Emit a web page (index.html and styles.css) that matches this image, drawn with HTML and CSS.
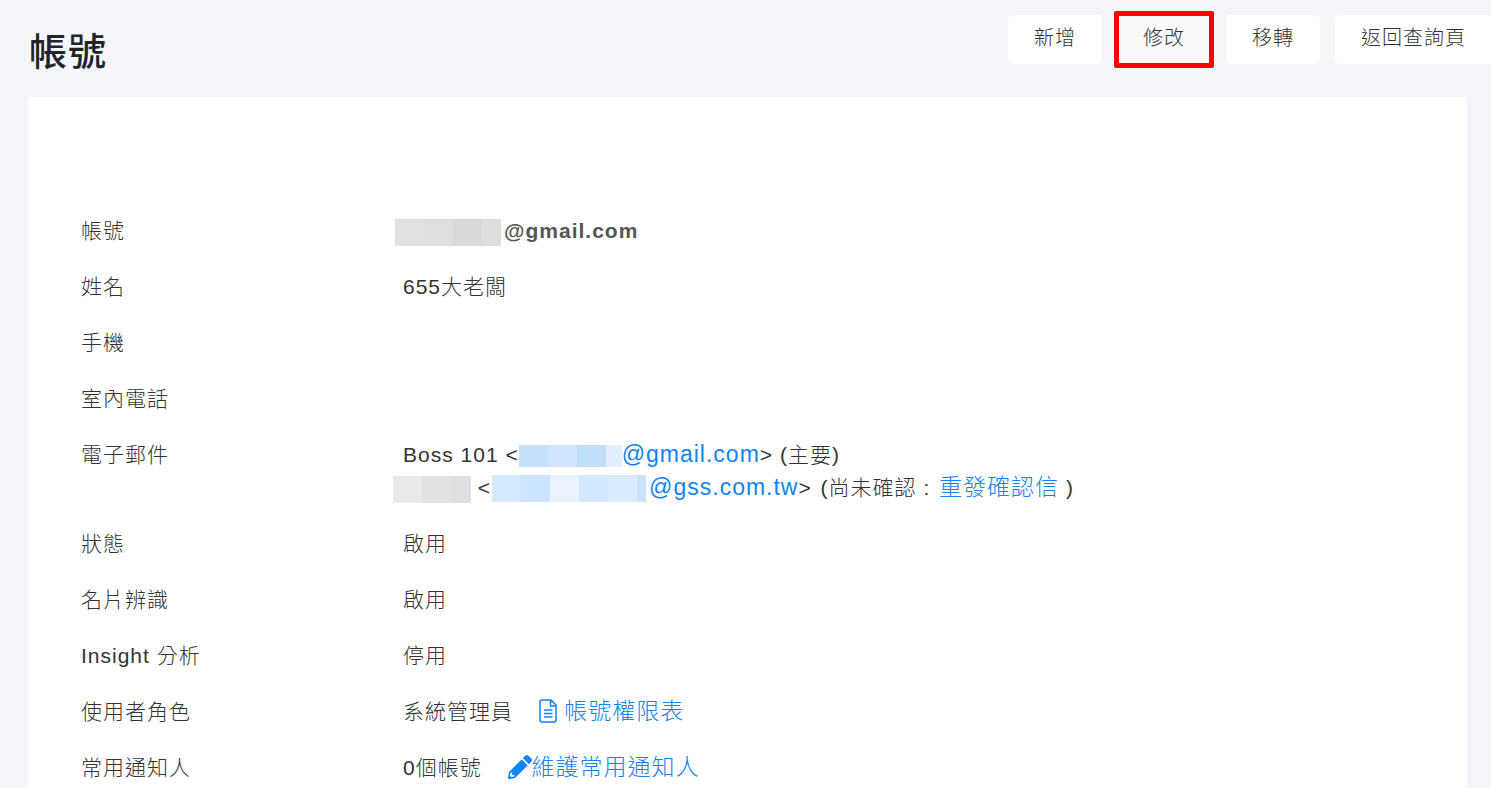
FILE: index.html
```html
<!DOCTYPE html>
<html lang="zh-Hant">
<head>
    <meta charset="UTF-8">
    <meta name="viewport" content="width=device-width, initial-scale=1.0">
    <title>帳號</title>
    <link rel="stylesheet" href="styles.css">
</head>
<body>
    <header class="page-header">
        <h1>帳號</h1>
        <div class="actions">
            <button type="button">新增</button>
            <button type="button" class="current">修改</button>
            <button type="button">移轉</button>
            <button type="button">返回查詢頁</button>
        </div>
    </header>
    <main class="panel">
        <dl class="details">
            <div class="row">
                <dt>帳號</dt>
                <dd><span class="mask mask-account"></span><strong>@gmail.com</strong></dd>
            </div>
            <div class="row">
                <dt>姓名</dt>
                <dd>655大老闆</dd>
            </div>
            <div class="row">
                <dt>手機</dt>
                <dd></dd>
            </div>
            <div class="row">
                <dt>室內電話</dt>
                <dd></dd>
            </div>
            <div class="row">
                <dt>電子郵件</dt>
                <dd>
                    <div>Boss 101 &lt;<a href="#"><span class="mask mask-mail"></span>@gmail.com</a>&gt; (主要)</div>
                    <div><span class="mask mask-name"></span> &lt;<a href="#"><span class="mask mask-mail-long"></span>@gss.com.tw</a>&gt; <span class="note">(尚未確認 : <a href="#">重發確認信</a> )</span></div>
                </dd>
            </div>
            <div class="row">
                <dt>狀態</dt>
                <dd>啟用</dd>
            </div>
            <div class="row">
                <dt>名片辨識</dt>
                <dd>啟用</dd>
            </div>
            <div class="row">
                <dt>Insight 分析</dt>
                <dd>停用</dd>
            </div>
            <div class="row">
                <dt>使用者角色</dt>
                <dd>系統管理員
                    <a href="#" class="icon-link">
                        <svg class="icon-file" viewBox="0 0 18 24" aria-hidden="true"><path d="M3 1h9l5 5v15a2 2 0 0 1-2 2H3a2 2 0 0 1-2-2V3a2 2 0 0 1 2-2zM11.500 1.500V7h5M5 11h8.500M5 14.500h8.500M5 18h8.500"/></svg>
                        帳號權限表</a>
                </dd>
            </div>
            <div class="row">
                <dt>常用通知人</dt>
                <dd>0個帳號
                    <a href="#" class="icon-link"><svg class="icon-pen" viewBox="0 0 512 512" aria-hidden="true"><path d="M497.900 142.100l-46.100 46.100c-4.700 4.700-12.300 4.700-17 0l-111-111c-4.700-4.700-4.700-12.300 0-17l46.100-46.100c18.700-18.700 49.100-18.700 67.900 0l60.100 60.100c18.800 18.700 18.800 49.100 0 67.900zM284.200 99.800L21.600 362.400.4 483.900c-2.900 16.400 11.400 30.600 27.800 27.800l121.500-21.300 262.600-262.600c4.700-4.700 4.700-12.300 0-17l-111-111c-4.800-4.700-12.400-4.700-17.100 0zM88 424h48v36.300l-64.500 11.300-31.100-31.100L51.700 376H88v48z"/></svg>維護常用通知人</a>
                </dd>
            </div>
        </dl>
    </main>
</body>
</html>
```
FILE: styles.css
```css
* {
    box-sizing: border-box;
}
body {
    display: flex;
    flex-direction: column;
    min-height: 100vh;
    margin: 0;
    background-color: #f5f6fb;
    color: #333;
    font-family: "Liberation Sans", "Noto Sans CJK TC", sans-serif;
    font-size: 21px;
    font-weight: 300;
    line-height: 33px;
    letter-spacing: 1px;
}
.page-header {
    display: flex;
    justify-content: space-between;
    align-items: flex-start;
    height: 97px;
    padding: 15px 0 0 29px;
    overflow: hidden;
}
h1 {
    margin: 0;
    color: #212529;
    font-size: 38px;
    font-weight: 500;
    line-height: 74px;
}
.actions {
    display: flex;
    gap: 15px;
    margin-right: -1px;
}
.actions button {
    position: relative;
    height: 49px;
    padding: 0 26px 2px;
    border: none;
    border-radius: 5px;
    background-color: #fff;
    color: #333;
    font: inherit;
    font-size: 20px;
    letter-spacing: inherit;
    white-space: nowrap;
    cursor: pointer;
}
.actions .current {
    background-color: #f9f9f9;
}
.actions .current::after {
    content: "";
    position: absolute;
    inset: -4px -3px;
    border: 5px solid #f00;
    border-radius: 2px;
}
.panel {
    flex: 1;
    margin: 0 24px 0 28px;
    padding: 106px 53px 0;
    background-color: #fff;
}
.details {
    margin: 0;
}
.row {
    display: grid;
    grid-template-columns: 322px 1fr;
    padding: 11px 0 12px;
}
.row:last-child {
    padding-bottom: 0;
}
dd {
    margin: 0;
}
strong {
    color: #555;
    font-weight: 700;
}
a {
    color: #1083f5;
    font-size: 23px;
    line-height: 24px;
    text-decoration: none;
}
a:hover {
    text-decoration: underline;
}
.note {
    margin-left: 2px;
}
.note a {
    margin-left: 2px;
}
.icon-link {
    margin-left: 19px;
}
.icon-file {
    width: 18px;
    height: 24px;
    vertical-align: -4px;
    fill: none;
    stroke: #1083ff;
    stroke-width: 1.5;
}
.icon-pen {
    width: 24px;
    height: 24px;
    vertical-align: -4px;
    fill: #1083ff;
}

/* blurred-out private text */
.mask {
    display: inline-block;
    height: 27px;
    vertical-align: middle;
}
.mask-account {
    width: 106px;
    margin: 0 3px 0 -8px;
    background: linear-gradient(90deg, #e1e1e1 0 29px, #dfdfdf 29px 58px, #d9d9d9 58px 87px, #dedede 87px);
}
.mask-name {
    width: 78px;
    margin-left: -10px;
    background: linear-gradient(90deg, #e9e9e9 0 29px, #e2e2e2 29px 58px, #dfdfdf 58px);
}
.mask-mail {
    width: 103px;
    height: 22px;
    background: linear-gradient(90deg, #c7e0fc 0 29px, #d0e5fd 29px 58px, #c2dffd 58px 87px, #e0effd 87px);
}
.mask-mail-long {
    width: 154px;
    margin: 0 3px 0 1px;
    background: linear-gradient(90deg, #d4e8fe 0 29px, #cce4fe 29px 58px, #e7f3fe 58px 87px, #d3e7fe 87px 116px, #daebfe 116px 145px, #c9e2fd 145px);
}
```
